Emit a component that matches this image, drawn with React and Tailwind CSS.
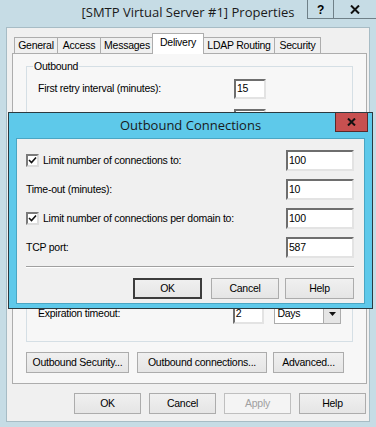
import React from 'react';

const TABS = [
  { name: 'General', w: 'w-[44px]' },
  { name: 'Access', w: 'w-[44px]' },
  { name: 'Messages', w: 'w-[54px]' },
  { name: 'Delivery', w: 'w-[52px]', active: true },
  { name: 'LDAP Routing', w: 'w-[72px]' },
  { name: 'Security', w: 'w-[47px]' },
];

function Btn({ children, w, def, disabled }) {
  return (
    <div
      className={`${w} h-[21px] flex items-center justify-center border ${
        def ? 'border-[#3c3c3c] shadow-[inset_0_0_0_1px_#3c3c3c]' : disabled ? 'border-[#bfbfbf]' : 'border-[#acacac]'
      } ${disabled ? 'bg-[#f4f4f4] text-[#a0a0a0]' : 'bg-gradient-to-b from-[#f0f0f0] to-[#e5e5e5]'}`}
    >
      {children}
    </div>
  );
}

function Field({ value, w = 'w-[32px]', h = 'h-[20px]' }) {
  return (
    <div className={`${w} ${h} bg-white border-2 border-t-[#6e6e6e] border-l-[#6e6e6e] border-r-[#e3e3e3] border-b-[#e3e3e3] pl-[1px] flex items-center`}>
      {value}
    </div>
  );
}

function Check() {
  return (
    <div className="w-[13px] h-[13px] bg-white border-2 border-t-[#7a7a7a] border-l-[#7a7a7a] border-r-[#dcdcdc] border-b-[#dcdcdc] flex items-center justify-center">
      <svg width="9" height="9" viewBox="0 0 9 9">
        <path d="M1 4 L3.5 6.5 L8 1.5" stroke="#111" strokeWidth="1.6" fill="none" />
      </svg>
    </div>
  );
}

export default function App() {
  return (
    <div className="w-[376px] h-[427px] bg-[#c6dce5] relative font-['Liberation_Sans',Arial,sans-serif] text-[10.5px] tracking-[-0.25px] text-black overflow-hidden">
      {/* title bar */}
      <div className="h-[27px] flex items-center justify-center pb-[2px] font-['Open_Sans',sans-serif] text-[13px] tracking-normal text-[#1a1a1a]">
        [SMTP Virtual Server #1] Properties
      </div>
      <div className="absolute top-0 right-0 flex h-[19px]">
        <div className="w-[27px] border-l border-r border-b border-[#6f8088] flex items-center justify-center font-bold text-[12px] pt-[1px]">?</div>
        <div className="w-[42px] border-b border-[#6f8088] flex items-center justify-center">
          <svg width="10" height="9" viewBox="0 0 10 9">
            <path d="M1 0.5 L9 8.5 M9 0.5 L1 8.5" stroke="#111" strokeWidth="2" />
          </svg>
        </div>
      </div>

      {/* window content */}
      <div className="mx-[6px] h-[395px] bg-[#f0f0f0] border border-[#a7bcc5] pl-[5px] pr-[2px] pt-[5px] flex flex-col">
        {/* tabs */}
        <div className="flex items-end h-[20px] pl-[2px] relative z-10">
          {TABS.map(t => (
            <div
              key={t.name}
              className={`${t.w} flex items-center justify-center border border-[#adadad] border-b-0 -mr-px ${
                t.active ? 'h-[21px] bg-white -mb-px -mx-[1px] pb-[2px]' : 'h-[16px] bg-[#f0f0f0]'
              }`}
            >
              {t.name}
            </div>
          ))}
        </div>
        {/* tab panel */}
        <div className="h-[331px] border border-[#adadad] bg-[#f7f7f7] px-[13px] pt-[12px]">
          <div className="h-[276px] border border-[#d5dfe5] relative px-[11px] pt-[12px]">
            <div className="absolute -top-[8px] left-[6px] px-[1px] bg-[#f7f7f7]">Outbound</div>
            <div className="flex items-center h-[20px]">
              <span className="w-[196px]">First retry interval (minutes):</span>
              <Field value="15" />
            </div>
            <div className="flex items-center h-[20px] mt-[10px] pl-[196px]">
              <Field value="" />
            </div>
            <div className="flex items-center h-[20px] mt-[175px]">
              <span className="w-[196px]">Expiration timeout:</span>
              <Field value="2" />
              <div className="ml-[10px] w-[67px] h-[19px] bg-white border border-[#acacac] flex items-center justify-between pl-[2px]">
                <span>Days</span>
                <div className="w-[17px] h-[17px] bg-[#e5e5e5] border-l border-[#acacac] flex items-center justify-center">
                  <svg width="7" height="4" viewBox="0 0 7 4"><path d="M0 0 H7 L3.5 4 Z" fill="#111" /></svg>
                </div>
              </div>
            </div>
          </div>
          <div className="flex mt-[10px]">
            <Btn w="w-[103px]">Outbound Security...</Btn>
            <div className="ml-[8px]"><Btn w="w-[130px]">Outbound connections...</Btn></div>
            <div className="ml-[6px]"><Btn w="w-[71px]">Advanced...</Btn></div>
          </div>
        </div>
        {/* bottom buttons */}
        <div className="flex justify-end gap-[8px] mt-[9px] pr-[1px]">
          <Btn w="w-[67px]">OK</Btn>
          <Btn w="w-[67px]">Cancel</Btn>
          <Btn w="w-[67px]" disabled>Apply</Btn>
          <Btn w="w-[67px]">Help</Btn>
        </div>
      </div>

      {/* Outbound Connections modal */}
      <div className="absolute left-[8px] top-[112px] w-[365px] h-[197px] bg-[#5ec9ea] border border-[#2b3a40] flex flex-col">
        <div className="h-[25px] flex items-center justify-center font-['Open_Sans',sans-serif] text-[13px] tracking-normal text-[#1a1a1a] relative">
          Outbound Connections
          <div className="absolute top-0 right-[4px] w-[33px] h-[19px] bg-[#c75050] border border-t-0 border-[#5a2a2a] flex items-center justify-center">
            <svg width="9" height="8" viewBox="0 0 9 8">
              <path d="M1 0.5 L8 7.5 M8 0.5 L1 7.5" stroke="#111" strokeWidth="2" />
            </svg>
          </div>
        </div>
        <div className="mx-[7px] bg-[#f0f0f0] border border-[#4aa6c4] pt-[11px] pl-[9px] pr-[10px] pb-[4px] flex flex-col">
          <div className="flex flex-col gap-[8px]">
            <div className="flex items-center justify-between h-[21px]">
              <div className="flex items-center gap-[4px]"><Check /><span>Limit number of connections to:</span></div>
              <Field value="100" w="w-[68px]" h="h-[21px]" />
            </div>
            <div className="flex items-center justify-between h-[21px]">
              <span>Time-out (minutes):</span>
              <Field value="10" w="w-[68px]" h="h-[21px]" />
            </div>
            <div className="flex items-center justify-between h-[21px]">
              <div className="flex items-center gap-[4px]"><Check /><span>Limit number of connections per domain to:</span></div>
              <Field value="100" w="w-[68px]" h="h-[21px]" />
            </div>
            <div className="flex items-center justify-between h-[21px]">
              <span>TCP port:</span>
              <Field value="587" w="w-[68px]" h="h-[21px]" />
            </div>
          </div>
          <div className="mt-[8px] border-t border-[#a0a0a0] border-b border-b-white" />
          <div className="flex justify-end mt-[10px]">
            <Btn w="w-[69px]" def>OK</Btn>
            <div className="ml-[9px]"><Btn w="w-[68px]">Cancel</Btn></div>
            <div className="ml-[6px]"><Btn w="w-[69px]">Help</Btn></div>
          </div>
        </div>
      </div>
    </div>
  );
}
